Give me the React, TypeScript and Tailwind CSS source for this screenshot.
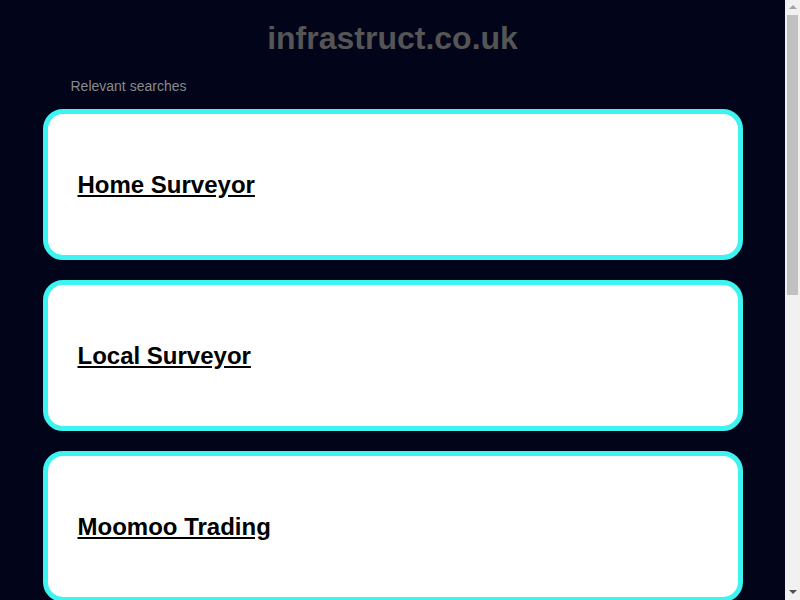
const searches = ['Home Surveyor', 'Local Surveyor', 'Moomoo Trading'];

function Scrollbar() {
  return (
    <div className="flex h-full w-[15px] shrink-0 flex-col bg-[#f1f1f1]">
      <div className="flex h-[15px] items-center justify-center">
        <svg width="8" height="5" viewBox="0 0 8 5">
          <path d="M4 0 L8 4 L0 4 Z" fill="#a3a3a3" />
        </svg>
      </div>
      <div className="mx-[2px] h-[280px] bg-[#c1c1c1]" />
      <div className="flex-1" />
      <div className="flex h-[15px] items-center justify-center">
        <svg width="8" height="5" viewBox="0 0 8 5">
          <path d="M0 0 L8 0 L4 4 Z" fill="#505050" />
        </svg>
      </div>
    </div>
  );
}

export default function App() {
  return (
    <div className="flex h-screen overflow-hidden bg-[#02041a] font-['Liberation_Sans',Arial,sans-serif]">
      <div className="h-full flex-1 overflow-hidden">
        <div className="pb-[106px]">
          <h1 className="pt-[20px] text-center text-[32px] font-bold leading-[37px] text-[#555555]">
            infrastruct.co.uk
          </h1>
          <div className="mx-auto w-[700px]">
            <p className="ml-[28px] mt-[21px] text-[14px] leading-[16px] text-[#8a8a8a]">Relevant searches</p>
            <div className="mt-[15px] flex flex-col gap-5">
              {searches.map((s) => (
                <div
                  key={s}
                  className="flex h-[151px] items-center rounded-[20px] border-[5px] border-[#3ef4f1] bg-white px-[30px]"
                >
                  <a href="#" className="text-[24px] font-bold leading-[28px] text-black underline">
                    {s}
                  </a>
                </div>
              ))}
            </div>
          </div>
        </div>
      </div>
      <Scrollbar />
    </div>
  );
}
